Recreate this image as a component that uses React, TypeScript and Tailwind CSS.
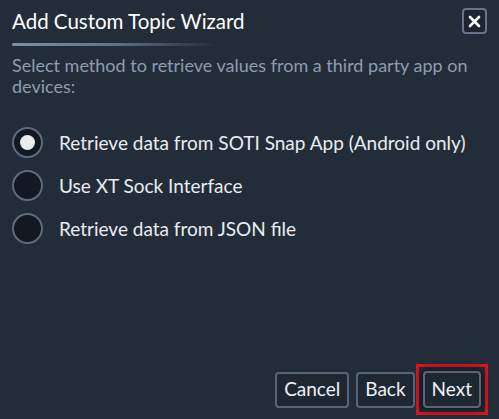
import { useState } from "react";

const options = [
  "Retrieve data from SOTI Snap App (Android only)",
  "Use XT Sock Interface",
  "Retrieve data from JSON file",
];

const Radio = ({ checked }: { checked: boolean }) => (
  <span className="w-[31px] h-[31px] rounded-full border-2 border-[#5d6b7b] bg-[#121922] flex items-center justify-center shrink-0">
    {checked && <span className="w-[15px] h-[15px] rounded-full bg-[#ececec]" />}
  </span>
);

export default function App() {
  const [selected, setSelected] = useState(0);

  return (
    <div
      className="w-[499px] h-[419px] bg-[#232d3a] flex flex-col text-[#e8ebef]"
      style={{ fontFamily: "Lato, 'Open Sans', sans-serif" }}
    >
      {/* Header */}
      <div className="flex items-start justify-between pl-[12px] pr-[12px] pt-[7px]">
        <h1 className="text-[20.5px] leading-[28px] font-normal text-white">Add Custom Topic Wizard</h1>
        <button className="mt-[1px] w-[25px] h-[26px] rounded-[4px] border-2 border-[#66768a] bg-[#1c2530] flex items-center justify-center">
          <svg width="13" height="13" viewBox="0 0 13 13">
            <path d="M2 2 L11 11 M11 2 L2 11" stroke="#ffffff" strokeWidth="2.6" strokeLinecap="round" />
          </svg>
        </button>
      </div>

      <div className="mx-[12px] mt-[8px] h-[3px] w-[205px] rounded-full bg-gradient-to-r from-[#7d90a6] via-[#5f7288] to-transparent" />

      <p className="px-[12px] mt-[9px] text-[18px] leading-[21px] text-[#8d9db0]">
        Select method to retrieve values from a third party app on devices:
      </p>

      {/* Options */}
      <div className="flex flex-col gap-[12px] mt-[30px] pl-[12px]">
        {options.map((o, i) => (
          <label key={o} className="flex items-center gap-[16px] cursor-pointer" onClick={() => setSelected(i)}>
            <Radio checked={selected === i} />
            <span className="text-[19px] leading-[31px] text-[#e9ecf0]">{o}</span>
          </label>
        ))}
      </div>

      <div className="flex-1" />

      {/* Footer */}
      <div className="flex justify-end items-center pr-[11px] pb-[4px]">
        <button className="h-[36px] px-[7px] rounded-[4px] border-2 border-[#56657a] bg-[#1e2833] text-[19px] text-[#eef0f3]">
          Cancel
        </button>
        <button className="ml-[7px] h-[36px] px-[7px] rounded-[4px] border-2 border-[#56657a] bg-[#1e2833] text-[19px] text-[#eef0f3]">
          Back
        </button>
        <div className="ml-[1px] border-[3px] border-[#e0141b] p-[4px]">
          <button className="h-[37px] px-[7px] rounded-[4px] border-2 border-[#56657a] bg-[#1e2833] text-[19px] text-[#eef0f3] shadow-[0_0_6px_3px_rgba(0,0,0,0.45)]">
            Next
          </button>
        </div>
      </div>
    </div>
  );
}
